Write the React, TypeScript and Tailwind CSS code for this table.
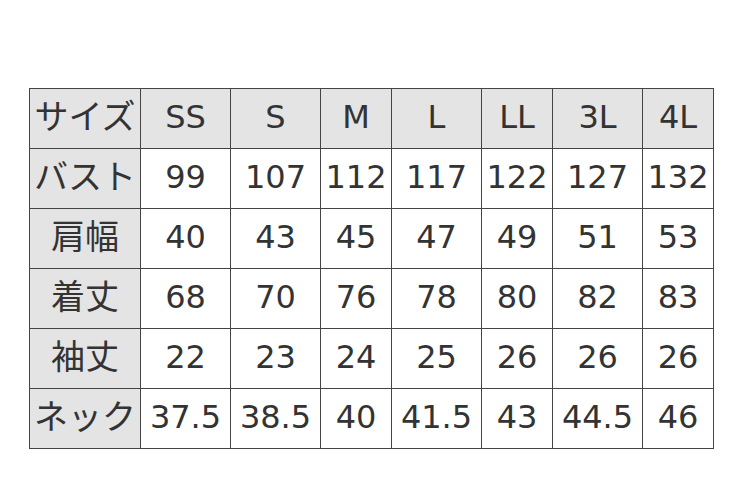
const sizes = ['SS', 'S', 'M', 'L', 'LL', '3L', '4L'];

const rows: { label: string; values: string[] }[] = [
  { label: 'バスト', values: ['99', '107', '112', '117', '122', '127', '132'] },
  { label: '肩幅', values: ['40', '43', '45', '47', '49', '51', '53'] },
  { label: '着丈', values: ['68', '70', '76', '78', '80', '82', '83'] },
  { label: '袖丈', values: ['22', '23', '24', '25', '26', '26', '26'] },
  { label: 'ネック', values: ['37.5', '38.5', '40', '41.5', '43', '44.5', '46'] },
];

const colWidths = ['w-[111px]', 'w-[90px]', 'w-[90px]', 'w-[71px]', 'w-[90px]', 'w-[71px]', 'w-[90px]', 'w-[71px]'];

function App() {
  return (
    <div
      className="w-[748px] h-[480px] bg-white pt-[88px] pl-[29px] text-[#333]"
      style={{ fontFamily: '"DejaVu Sans", "Noto Sans CJK JP", sans-serif' }}
    >
      <table className="table-fixed border-collapse w-[684px] text-[32px] leading-none">
        <colgroup>
          {colWidths.map((w, i) => (
            <col key={i} className={w} />
          ))}
        </colgroup>
        <thead>
          <tr className="h-[60px] bg-[#e4e4e4]">
            <th className="border border-[#444] font-normal text-center text-[34px] p-0 pb-1 whitespace-nowrap">サイズ</th>
            {sizes.map((s) => (
              <th key={s} className="border border-[#444] font-normal text-center p-0 pb-1">
                {s}
              </th>
            ))}
          </tr>
        </thead>
        <tbody>
          {rows.map((r) => (
            <tr key={r.label} className="h-[60px]">
              <th className="border border-[#444] bg-[#e4e4e4] font-normal text-center text-[34px] p-0 pb-1 whitespace-nowrap">
                {r.label}
              </th>
              {r.values.map((v, i) => (
                <td key={i} className="border border-[#444] text-center p-0 pb-1 whitespace-nowrap">
                  {v}
                </td>
              ))}
            </tr>
          ))}
        </tbody>
      </table>
    </div>
  );
}

export default App;
